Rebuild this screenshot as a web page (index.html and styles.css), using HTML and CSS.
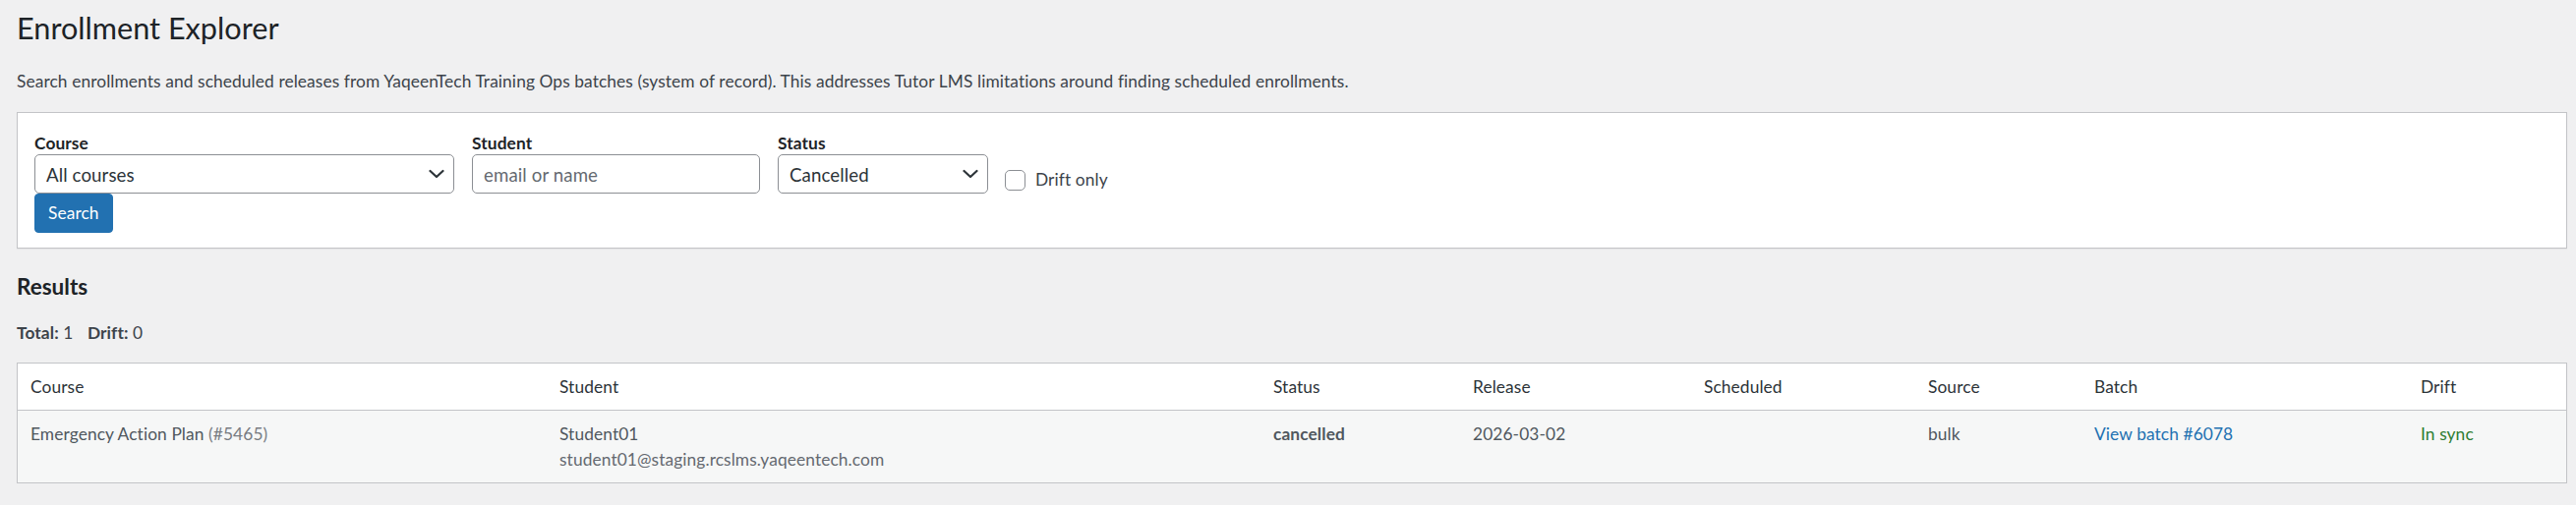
FILE: index.html
```html
<!DOCTYPE html>
<html lang="en">
<head>
<meta charset="utf-8">
<title>Enrollment Explorer</title>
<link rel="stylesheet" href="styles.css">
</head>
<body>
<div class="wrap">
  <h1 class="page-title">Enrollment Explorer</h1>
  <p class="intro">Search enrollments and scheduled releases from YaqeenTech Training Ops batches (system of record). This addresses Tutor LMS limitations around finding scheduled enrollments.</p>

  <form class="filters">
    <div class="filter-row">
      <label class="field field-course">
        <span class="field-label">Course</span>
        <span class="select-wrap">
          <select class="control">
            <option>All courses</option>
          </select>
          <svg class="chev" width="16" height="10" viewBox="0 0 16 10" aria-hidden="true"><polyline points="1.5,2 8,8 14.5,2" fill="none" stroke="#2c3338" stroke-width="2.2" stroke-linecap="round" stroke-linejoin="round"/></svg>
        </span>
      </label>
      <label class="field field-student">
        <span class="field-label">Student</span>
        <input class="control" type="text" placeholder="email or name">
      </label>
      <label class="field field-status">
        <span class="field-label">Status</span>
        <span class="select-wrap">
          <select class="control">
            <option>Cancelled</option>
          </select>
          <svg class="chev" width="16" height="10" viewBox="0 0 16 10" aria-hidden="true"><polyline points="1.5,2 8,8 14.5,2" fill="none" stroke="#2c3338" stroke-width="2.2" stroke-linecap="round" stroke-linejoin="round"/></svg>
        </span>
      </label>
      <label class="check">
        <input type="checkbox" class="checkbox">
        <span>Drift only</span>
      </label>
    </div>
    <div class="actions">
      <button type="button" class="button-primary">Search</button>
    </div>
  </form>

  <h2 class="section-title">Results</h2>
  <p class="totals"><strong>Total:</strong> 1 <span class="sep"></span><strong>Drift:</strong> 0</p>

  <table class="results">
    <colgroup>
      <col class="c-course">
      <col class="c-student">
      <col class="c-status">
      <col class="c-release">
      <col class="c-scheduled">
      <col class="c-source">
      <col class="c-batch">
      <col class="c-drift">
    </colgroup>
    <thead>
      <tr>
        <th>Course</th>
        <th>Student</th>
        <th>Status</th>
        <th>Release</th>
        <th>Scheduled</th>
        <th>Source</th>
        <th>Batch</th>
        <th>Drift</th>
      </tr>
    </thead>
    <tbody>
      <tr>
        <td>Emergency Action Plan <span class="muted">(#5465)</span></td>
        <td>Student01<br><span class="email">student01@staging.rcslms.yaqeentech.com</span></td>
        <td><strong class="status">cancelled</strong></td>
        <td>2026-03-02</td>
        <td></td>
        <td>bulk</td>
        <td><a href="#" class="link">View batch #6078</a></td>
        <td><span class="sync">In sync</span></td>
      </tr>
    </tbody>
  </table>
</div>
</body>
</html>
```

FILE: styles.css
```css
* { box-sizing: border-box; }

html, body {
  margin: 0;
  padding: 0;
  background: #f0f0f1;
}

body {
  font-family: Lato, "Noto Sans", "Liberation Sans", sans-serif;
  font-size: 17.33px;
  line-height: 26px;
  letter-spacing: 0.1px;
  color: #3c434a;
}

.wrap {
  padding: 0 9px 0 17px;
}

.page-title {
  margin: 0;
  padding-top: 9px;
  font-size: 30.67px;
  line-height: 40px;
  font-weight: 400;
  letter-spacing: 0;
  color: #1d2327;
}

.intro {
  margin: 21px 0 0;
  color: #3c434a;
}

.filters {
  margin-top: 18px;
  background: #fff;
  border: 1px solid #c3c4c7;
  box-shadow: 0 1px 1px rgba(0,0,0,.04);
  padding: 20px 17px 15px;
}

.filter-row {
  display: flex;
  align-items: flex-end;
  gap: 18px;
}

.field {
  display: flex;
  flex-direction: column;
}

.field-label {
  display: block;
  font-weight: 700;
  line-height: 22px;
  color: #1d2327;
}

.field-course { width: 427px; }
.field-student { width: 293px; }
.field-status { width: 214px; }

.select-wrap {
  position: relative;
  display: block;
}

.control {
  display: block;
  width: 100%;
  height: 40px;
  margin: 0;
  border: 1px solid #8c8f94;
  border-radius: 5px;
  background: #fff;
  font-family: inherit;
  font-size: 18.67px;
  letter-spacing: 0.1px;
  color: #2c3338;
  padding: 1px 32px 0 11px;
  -webkit-appearance: none;
  appearance: none;
  outline: none;
}

input.control { padding-right: 11px; }

.control::placeholder { color: #646970; }

.chev {
  position: absolute;
  right: 10px;
  top: 15px;
  pointer-events: none;
}

.check {
  display: flex;
  align-items: center;
  height: 26px;
  margin-bottom: 1px;
  margin-left: -1px;
  color: #3c434a;
}

.checkbox {
  -webkit-appearance: none;
  appearance: none;
  width: 21px;
  height: 21px;
  margin: 0 10px 0 0;
  border: 1px solid #8c8f94;
  border-radius: 5px;
  background: #fff;
}

.actions {
  display: flex;
}

.button-primary {
  height: 40px;
  padding: 0 13px;
  margin: 0;
  border: 1px solid #2271b1;
  border-radius: 4px;
  background: #2271b1;
  color: #fff;
  font-family: inherit;
  font-size: 17.33px;
  letter-spacing: 0.1px;
  line-height: 38px;
}

.section-title {
  margin: 24px 0 0;
  font-size: 22.5px;
  line-height: 30px;
  font-weight: 700;
  letter-spacing: 0;
  color: #1d2327;
}

.totals {
  margin: 19px 0 0;
  color: #3c434a;
}

.totals strong { font-weight: 700; }

.sep {
  display: inline-block;
  width: 10px;
}

.results {
  margin-top: 17px;
  width: 100%;
  table-layout: fixed;
  border-collapse: separate;
  border-spacing: 0;
  border: 1px solid #c3c4c7;
  background: #fff;
  box-shadow: 0 1px 1px rgba(0,0,0,.04);
}

.c-course { width: 538px; }
.c-student { width: 726px; }
.c-status { width: 203px; }
.c-release { width: 235px; }
.c-scheduled { width: 228px; }
.c-source { width: 169px; }
.c-batch { width: 332px; }
.c-drift { width: 161px; }

.results th {
  text-align: left;
  font-weight: 400;
  color: #2c3338;
  padding: 11px 13px;
  line-height: 25px;
  border-bottom: 1px solid #c3c4c7;
}

.results td {
  vertical-align: top;
  color: #50575e;
  background: #f6f7f7;
  padding: 11px 13px 10px;
  line-height: 26px;
}

.muted { color: #787c82; }
.email { color: #646970; }

.status {
  font-weight: 700;
  color: #50575e;
}

.link {
  color: #2271b1;
  text-decoration: none;
}

.sync { color: #2e7d32; }
```
